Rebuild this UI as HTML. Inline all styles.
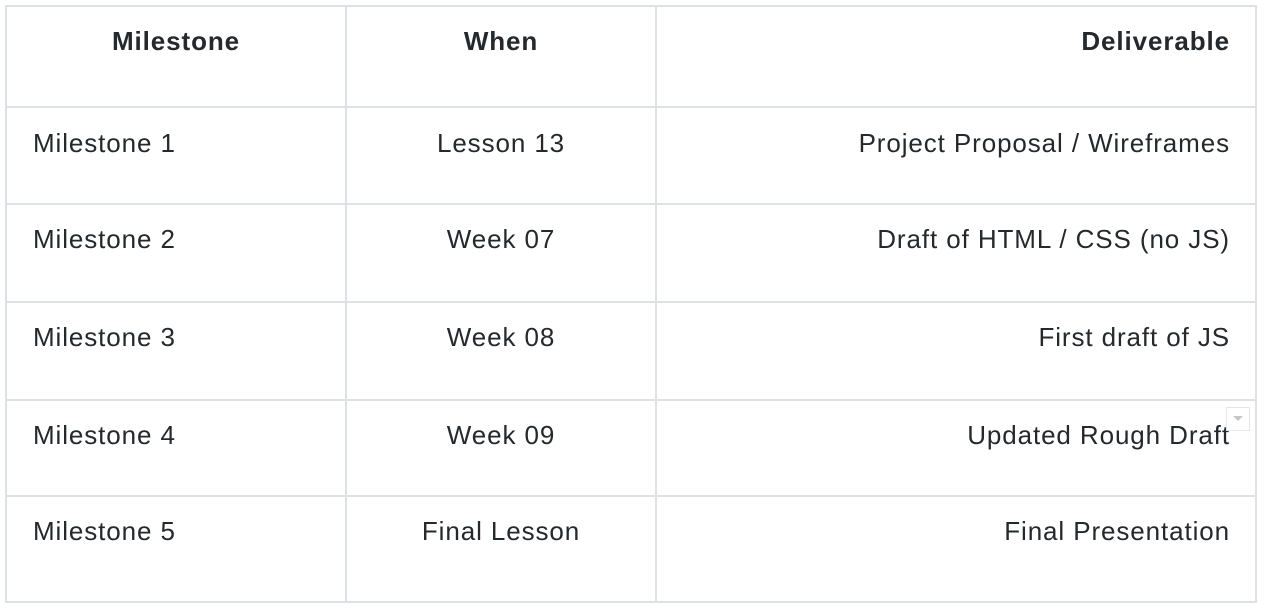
<!DOCTYPE html>
<html><head><style>
body{margin:0;background:#fff;width:1264px;height:608px;position:relative;overflow:hidden;font-family:"Liberation Sans",sans-serif;color:#24292e;font-size:26px;letter-spacing:0.9px}
.h{position:absolute;background:#dfe2e5;height:2px;left:5px;width:1252px}
.v{position:absolute;background:#dfe2e5;width:2px;top:5px;height:598px}
.t{position:absolute;line-height:30px;height:30px;white-space:nowrap}
.c1{left:33px}
.c2{left:346px;width:310px;text-align:center}
.c3{right:34px;text-align:right}
b{font-weight:bold}
</style></head><body>
<div class="h" style="top:5px"></div>
<div class="h" style="top:106px"></div>
<div class="h" style="top:203px"></div>
<div class="h" style="top:301px"></div>
<div class="h" style="top:399px"></div>
<div class="h" style="top:495px"></div>
<div class="h" style="top:601px"></div>
<div class="v" style="left:5px"></div>
<div class="v" style="left:345px"></div>
<div class="v" style="left:655px"></div>
<div class="v" style="left:1255px"></div>

<div class="t" style="left:6px;width:340px;text-align:center;top:26px"><b>Milestone</b></div>
<div class="t c2" style="top:26px"><b>When</b></div>
<div class="t c3" style="top:26px"><b>Deliverable</b></div>

<div class="t c1" style="top:128px">Milestone 1</div>
<div class="t c2" style="top:128px">Lesson 13</div>
<div class="t c3" style="top:128px">Project Proposal / Wireframes</div>

<div class="t c1" style="top:224px">Milestone 2</div>
<div class="t c2" style="top:224px">Week 07</div>
<div class="t c3" style="top:224px">Draft of HTML / CSS (no JS)</div>

<div class="t c1" style="top:322px">Milestone 3</div>
<div class="t c2" style="top:322px">Week 08</div>
<div class="t c3" style="top:322px">First draft of JS</div>

<div class="t c1" style="top:420px">Milestone 4</div>
<div class="t c2" style="top:420px">Week 09</div>
<div class="t c3" style="top:420px">Updated Rough Draft</div>

<div class="t c1" style="top:516px">Milestone 5</div>
<div class="t c2" style="top:516px">Final Lesson</div>
<div class="t c3" style="top:516px">Final Presentation</div>

<div style="position:absolute;left:1226px;top:407px;width:24px;height:24px;box-sizing:border-box;border:1px solid #e4e6e8;background:#fff">
<svg width="22" height="22" style="position:absolute;left:0;top:0"><path d="M6 8 L16 8 L11 13 Z" fill="#c4c6c8"/></svg>
</div>
</body></html>
